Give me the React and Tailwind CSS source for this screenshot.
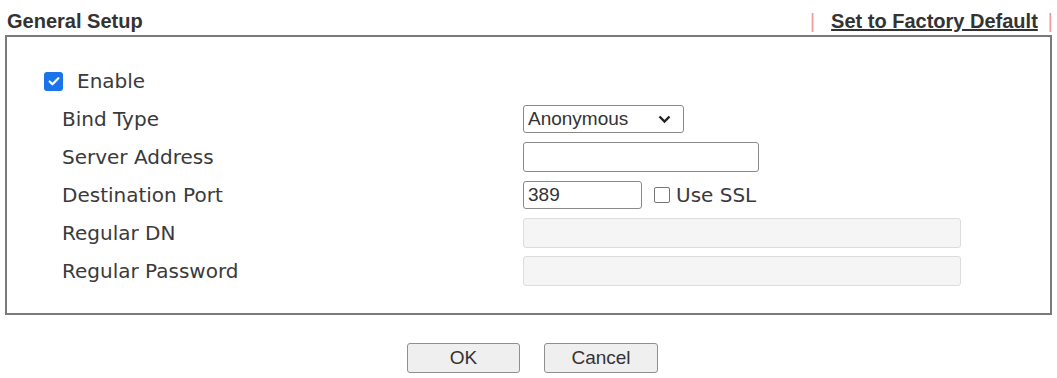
import React from 'react'

const labelFont = { fontFamily: '"DejaVu Sans", Verdana, sans-serif' }

function CheckBox({ checked }) {
  if (checked) {
    return (
      <span className="inline-flex w-[19px] h-[19px] rounded-[3px] bg-[#1a73e8] items-center justify-center">
        <svg width="14" height="14" viewBox="0 0 16 16">
          <path d="M3 8.5l3.2 3.2L13 4.8" fill="none" stroke="#fff" strokeWidth="2.6" strokeLinecap="round" strokeLinejoin="round" />
        </svg>
      </span>
    )
  }
  return <span className="inline-block w-[16px] h-[16px] rounded-[2px] border border-[#767676] bg-white" />
}

function Row({ label, children }) {
  return (
    <div className="flex items-center h-[38px]">
      <div className="w-[516px] pl-[55px] text-[20px] text-[#3a3a3a]" style={labelFont}>{label}</div>
      <div className="flex items-center">{children}</div>
    </div>
  )
}

function TextBox({ width, value, disabled }) {
  return (
    <div
      className={
        'h-[30px] rounded-[3px] border flex items-center px-[4px] text-[19px] text-[#333] font-["Liberation_Sans",Arial,sans-serif] ' +
        (disabled ? 'bg-[#f5f5f5] border-[#dcdcdc]' : 'bg-white border-[#8a8a8a]')
      }
      style={{ width }}
    >
      {value}
    </div>
  )
}

export default function App() {
  return (
    <div className="w-[1057px] h-[378px] bg-white overflow-hidden">
      <div className="flex items-end justify-between h-[34px] pb-[1px] pl-[7px] pr-[4px] font-['Liberation_Sans',Arial,sans-serif] font-bold text-[20px] leading-[24px] text-[#333]">
        <span>General Setup</span>
        <span className="flex items-center">
          <span className="text-[#f29a9a] font-normal mr-[16px]">|</span>
          <span className="underline">Set to Factory Default</span>
          <span className="text-[#f29a9a] font-normal ml-[10px]">|</span>
        </span>
      </div>

      <div className="mx-[5px] mt-[1px] h-[280px] border-2 border-[#7a7a7a] pt-[25px]">
        <div className="flex items-center h-[38px] pl-[37px]">
          <CheckBox checked />
          <span className="ml-[14px] text-[20px] text-[#3a3a3a]" style={labelFont}>Enable</span>
        </div>
        <Row label="Bind Type">
          <div className="w-[161px] h-[28px] rounded-[3px] border border-[#8a8a8a] flex items-center justify-between pl-[4px] pr-[12px] text-[19px] text-[#333] font-['Liberation_Sans',Arial,sans-serif]">
            <span>Anonymous</span>
            <svg width="13" height="9" viewBox="0 0 13 9">
              <path d="M1.5 1.5l5 5 5-5" fill="none" stroke="#222" strokeWidth="2.4" />
            </svg>
          </div>
        </Row>
        <Row label="Server Address">
          <TextBox width={236} />
        </Row>
        <Row label="Destination Port">
          <div className="w-[119px] h-[28px] rounded-[3px] border border-[#8a8a8a] flex items-center px-[4px] text-[19px] text-[#333] font-['Liberation_Sans',Arial,sans-serif]">389</div>
          <span className="ml-[12px] flex items-center">
            <CheckBox />
            <span className="ml-[6px] text-[20px] text-[#3a3a3a]" style={labelFont}>Use SSL</span>
          </span>
        </Row>
        <Row label="Regular DN">
          <TextBox width={438} disabled />
        </Row>
        <Row label="Regular Password">
          <TextBox width={438} disabled />
        </Row>
      </div>

      <div className="flex justify-center gap-[24px] mt-[28px] pl-[8px] font-['Liberation_Sans',Arial,sans-serif] text-[19px] text-[#333]">
        <button className="w-[113px] h-[30px] rounded-[3px] border border-[#8f8f8f] bg-[#efefef]">OK</button>
        <button className="w-[114px] h-[30px] rounded-[3px] border border-[#8f8f8f] bg-[#efefef]">Cancel</button>
      </div>
    </div>
  )
}
